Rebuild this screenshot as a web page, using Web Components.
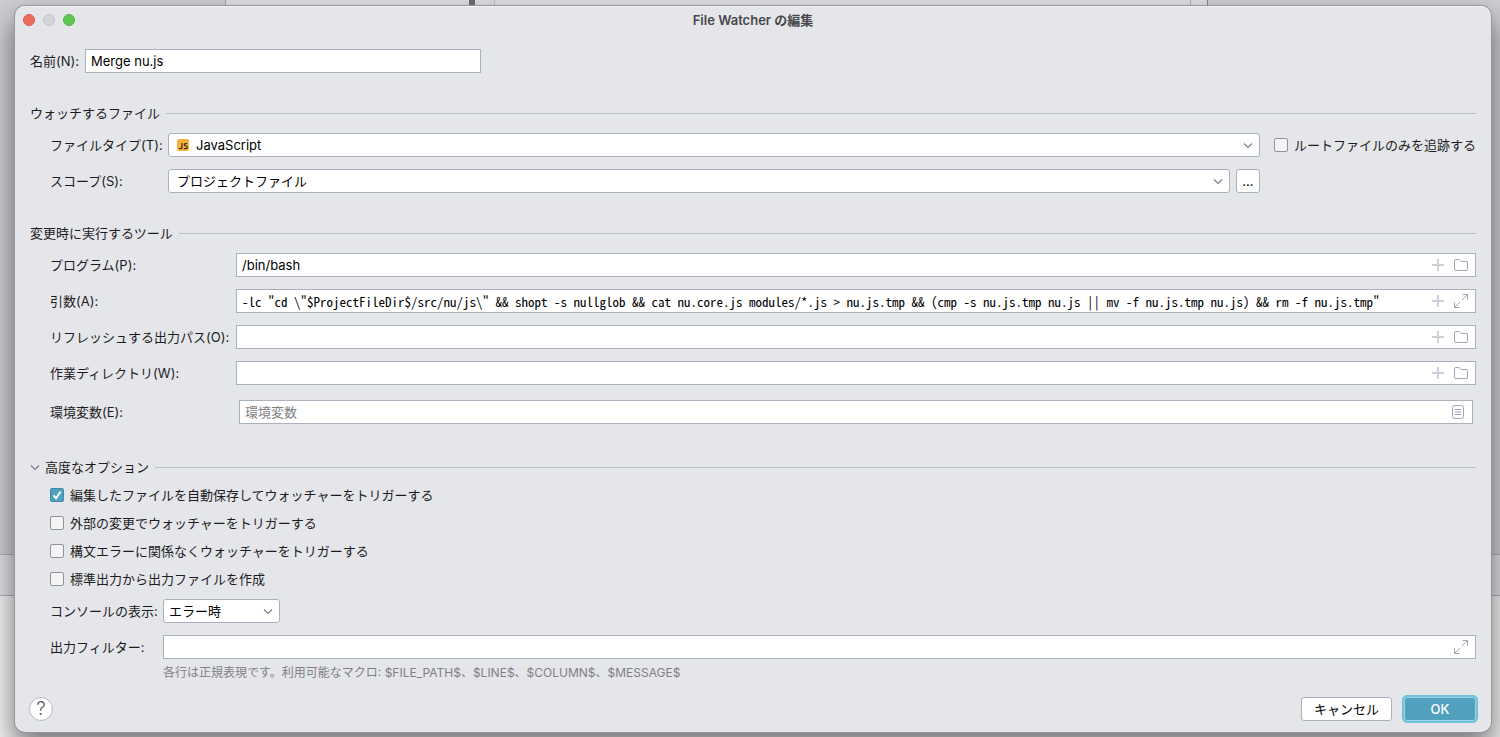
<!DOCTYPE html>
<html lang="ja">
<head>
<meta charset="utf-8">
<title>File Watcher の編集</title>
<style>
    html {
        height: 100%;
    }
    body {
        margin: 0;
        min-height: 100%;
        display: grid;
        font: 13px/16px Inter, "Noto Sans CJK JP", sans-serif;
        color: #1c1c1e;
        --panel: #e5e6ea;
        --border: #a9b1bd;
        --line: #bcbfc6;
        --muted: #808083;
        --accent: #50a0be;
    }
    ide-backdrop, watcher-dialog {
        grid-area: 1 / 1;
    }
    .watch {
        display: flex;
        align-items: flex-start;
        gap: 14px;
    }
    .stack {
        flex: 1;
        min-width: 0;
        display: flex;
        flex-direction: column;
        gap: 12px;
    }
    .watch check-option {
        margin-top: 4px;
    }
</style>
</head>
<body>
<ide-backdrop></ide-backdrop>

<watcher-dialog heading="File Watcher の編集">
    <text-row class="name" label="名前(N):" value="Merge nu.js" style="--label-width: 55px; --row-width: 451px"></text-row>

    <option-group heading="ウォッチするファイル" style="--label-width: 118px">
        <div class="watch">
            <div class="stack">
                <select-row label="ファイルタイプ(T):" value="JavaScript" icon="js" wide></select-row>
                <select-row label="スコープ(S):" value="プロジェクトファイル" wide more></select-row>
            </div>
            <check-option label="ルートファイルのみを追跡する"></check-option>
        </div>
    </option-group>

    <option-group heading="変更時に実行するツール" style="--label-width: 186px">
        <text-row label="プログラム(P):" value="/bin/bash" actions="add folder"></text-row>
        <text-row label="引数(A):" mono actions="add expand"
            value='-lc "cd \"$ProjectFileDir$/src/nu/js\" &amp;&amp; shopt -s nullglob &amp;&amp; cat nu.core.js modules/*.js &gt; nu.js.tmp &amp;&amp; (cmp -s nu.js.tmp nu.js || mv -f nu.js.tmp nu.js) &amp;&amp; rm -f nu.js.tmp"'></text-row>
        <text-row label="リフレッシュする出力パス(O):" actions="add folder"></text-row>
        <text-row label="作業ディレクトリ(W):" actions="add folder"></text-row>
        <text-row label="環境変数(E):" placeholder="環境変数" actions="list" inset></text-row>
    </option-group>

    <option-group heading="高度なオプション" collapsible style="--label-width: 113px">
        <check-option label="編集したファイルを自動保存してウォッチャーをトリガーする" checked></check-option>
        <check-option label="外部の変更でウォッチャーをトリガーする"></check-option>
        <check-option label="構文エラーに関係なくウォッチャーをトリガーする"></check-option>
        <check-option label="標準出力から出力ファイルを作成"></check-option>
        <select-row label="コンソールの表示:" value="エラー時"></select-row>
        <text-row label="出力フィルター:" actions="expand" hint="各行は正規表現です。利用可能なマクロ: $FILE_PATH$、$LINE$、$COLUMN$、$MESSAGE$"></text-row>
    </option-group>

    <help-button slot="help"></help-button>
    <push-button slot="buttons">キャンセル</push-button>
    <push-button slot="buttons" primary>OK</push-button>
</watcher-dialog>

<script>
const icons = {
    add: '<svg width="16" height="16" viewBox="0 0 16 16"><path d="M8 2v12M2 8h12" stroke="#cdcfd9" stroke-width="2"/></svg>',
    folder: '<svg width="16" height="16" viewBox="0 0 16 16" fill="none" stroke="#9fa4b8"><path d="M1.500 4a1.500 1.500 0 0 1 1.500-1.500h3L8 4.500h5a1.500 1.500 0 0 1 1.500 1.500v6a1.500 1.500 0 0 1-1.500 1.500H3A1.500 1.500 0 0 1 1.500 12z"/></svg>',
    expand: '<svg width="16" height="16" viewBox="0 0 16 16" fill="none" stroke="#9fa4b8"><path d="M9.500 1.500h5v5M14.500 1.500L9 7M6.500 14.500h-5v-5M1.500 14.500L7 9"/></svg>',
    list: '<svg width="16" height="16" viewBox="0 0 16 16" fill="none" stroke="#9fa4b8"><rect x="2.500" y="1.500" width="11" height="13" rx="2"/><path d="M5 5.500h6M5 10.500h6"/><path d="M5 8h6" stroke="#cdcfd9" stroke-width="2"/></svg>',
    chevron: '<svg width="16" height="16" viewBox="0 0 16 16" fill="none" stroke="#767a8a" stroke-width="1.100"><path d="M4 6.500L8 10.500l4-4"/></svg>',
    js: '<svg width="12" height="12" viewBox="0 0 12 12"><rect width="12" height="12" rx="2" fill="#f5b13c"/><path d="M5 4v4.200q0 1.500-1.400 1.500-.9 0-1.400-.5M10.200 5Q9.500 4.500 8.600 4.500 7.300 4.500 7.300 5.600T8.800 7 10.300 8.500 8.700 9.700 6.900 9.100" fill="none" stroke="#29231a" stroke-width="1.200"/></svg>'
};

const actionNames = {
    add: 'マクロを挿入',
    folder: '参照',
    expand: '展開',
    list: '変数の編集'
};

class BaseElement extends HTMLElement {

    connectedCallback() {
        this.shadow = this.attachShadow({mode: 'open'});
        this.shadow.innerHTML = this.template();
        this.bind();
    }

    attr(name) {
        return (this.getAttribute(name) || '').replace(/&/g, '&amp;').replace(/"/g, '&quot;').replace(/</g, '&lt;');
    }

    bind() {}

}

// IDE windows behind the dialog
class IdeBackdrop extends BaseElement {

    template() {
        return `
<style>
    :host {
        display: flex;
        flex-direction: column;
        background: #cecfd3;
    }
    .window {
        height: 6px;
        margin: 0 292px 0 225px;
        display: flex;
        background: #dfe0e4;
        border-left: 1px solid #a2a3a7;
        border-right: 1px solid #85868a;
    }
    .tree {
        flex: 0 0 243px;
    }
    .bar {
        flex: 0 0 6px;
        background: #6c6d70;
    }
    .gutter {
        flex: 0 0 19px;
        border-right: 1px solid #c0c1c5;
    }
    .editor {
        flex: 1;
        border-right: 1px solid #b5b6ba;
    }
    .scroll {
        flex: 0 0 16px;
    }
    .space {
        flex: 1;
    }
    .status {
        height: 42px;
        border-top: 1px solid #b4b5b9;
        border-bottom: 1px solid #aeb4bc;
        background: #dfe1e6;
        box-sizing: border-box;
    }
    .console {
        height: 141px;
        background: #f2f2f2;
    }
</style>
<div class="window">
    <div class="tree"></div>
    <div class="bar"></div>
    <div class="gutter"></div>
    <div class="editor"></div>
    <div class="scroll"></div>
</div>
<div class="space"></div>
<div class="status"></div>
<div class="console"></div>
        `;
    }

}
customElements.define('ide-backdrop', IdeBackdrop);

class WatcherDialog extends BaseElement {

    template() {
        return `
<style>
    :host {
        display: flex;
        flex-direction: column;
        margin: 6px 9px 5px 15px;
        border-radius: 10px;
        background: var(--panel);
        box-shadow: inset 0 1px #f4f5f7, 0 0 0 1px #96979b, 0 14px 28px 2px #00000080;
        z-index: 1;
    }
    header {
        display: grid;
        grid-template-columns: 1fr auto 1fr;
        align-items: center;
        height: 28px;
        padding: 0 8px;
    }
    .lights {
        display: flex;
        gap: 8px;
    }
    .lights button {
        width: 12px;
        height: 12px;
        padding: 0;
        border: 1px solid #e0574c;
        border-radius: 50%;
        background: #ee6a5f;
    }
    .lights .min {
        border-color: #c5c6c8;
        background: #d5d6d8;
    }
    .lights .max {
        border-color: #50b244;
        background: #61c554;
    }
    h1 {
        margin: 0;
        font-size: 13px;
        line-height: 16px;
        font-weight: 600;
        color: #47484b;
    }
    main {
        flex: 1;
        display: flex;
        flex-direction: column;
        gap: 32px;
        padding: 15px 15px 14px;
    }
    footer {
        display: flex;
        align-items: center;
        padding: 0 13px 9px 14px;
    }
    .buttons {
        margin-left: auto;
        display: flex;
        align-items: center;
        gap: 10px;
    }
</style>
<header>
    <div class="lights">
        <button aria-label="閉じる"></button>
        <button class="min" aria-label="しまう" disabled></button>
        <button class="max" aria-label="拡大"></button>
    </div>
    <h1>${this.attr('heading')}</h1>
</header>
<main><slot></slot></main>
<footer>
    <slot name="help"></slot>
    <div class="buttons"><slot name="buttons"></slot></div>
</footer>
        `;
    }

}
customElements.define('watcher-dialog', WatcherDialog);

class OptionGroup extends BaseElement {

    template() {
        return `
<style>
    :host {
        display: block;
    }
    h2 {
        margin: 0 0 12px;
        display: flex;
        align-items: center;
        gap: 6px;
        font-size: 13px;
        line-height: 16px;
        font-weight: 400;
    }
    h2::after {
        content: "";
        flex: 1;
        height: 1px;
        background: var(--line);
    }
    button {
        display: flex;
        align-items: center;
        margin-left: -3px;
        padding: 0;
        border: 0;
        background: none;
        font: inherit;
        color: inherit;
    }
    svg {
        margin-right: 2px;
    }
    .content {
        display: flex;
        flex-direction: column;
        gap: 12px;
        padding-left: 20px;
    }
    .content[hidden] {
        display: none;
    }
</style>
<h2>${this.hasAttribute('collapsible') ? `<button aria-expanded="true">${icons.chevron}${this.attr('heading')}</button>` : this.attr('heading')}</h2>
<div class="content"><slot></slot></div>
        `;
    }

    bind() {
        const toggle = this.shadow.querySelector('button');
        if (!toggle) return;
        toggle.addEventListener('click', () => {
            const content = this.shadow.querySelector('.content');
            content.hidden = !content.hidden;
            toggle.setAttribute('aria-expanded', !content.hidden);
        });
    }

}
customElements.define('option-group', OptionGroup);

class TextRow extends BaseElement {

    template() {
        const actions = this.attr('actions').split(' ').filter(Boolean);
        return `
<style>
    :host {
        display: grid;
        grid-template-columns: var(--label-width) 1fr;
        align-items: center;
        max-width: var(--row-width, none);
    }
    label {
        white-space: nowrap;
    }
    .box {
        display: flex;
        align-items: center;
        gap: 7px;
        height: 24px;
        box-sizing: border-box;
        border: 1px solid var(--border);
        background: #fff;
        padding-right: 6px;
    }
    :host([inset]) .box {
        margin: 3px;
    }
    input {
        flex: 1;
        min-width: 0;
        height: 22px;
        padding: 0 5px;
        border: 0;
        outline: 0;
        background: none;
        font: inherit;
        color: #000;
    }
    :host([mono]) input {
        font-family: "Noto Sans Mono CJK JP", "Liberation Mono", monospace;
    }
    input::placeholder {
        color: var(--muted);
    }
    button {
        display: flex;
        padding: 0;
        border: 0;
        background: none;
    }
    p {
        grid-column: 2;
        margin: 6px 0 0;
        font-size: 12px;
        line-height: 16px;
        color: var(--muted);
    }
</style>
<label for="field">${this.attr('label')}</label>
<div class="box">
    <input id="field" type="text" value="${this.attr('value')}" placeholder="${this.attr('placeholder')}">
    ${actions.map(name => `<button aria-label="${actionNames[name]}">${icons[name]}</button>`).join('')}
</div>
${this.hasAttribute('hint') ? `<p>${this.attr('hint')}</p>` : ''}
        `;
    }

}
customElements.define('text-row', TextRow);

class SelectRow extends BaseElement {

    template() {
        return `
<style>
    :host {
        display: flex;
        align-items: center;
    }
    label {
        flex: 0 0 var(--label-width);
        white-space: nowrap;
    }
    .box {
        display: flex;
        align-items: center;
        width: 117px;
        height: 24px;
        box-sizing: border-box;
        border: 1px solid var(--border);
        border-radius: 3px;
        background: #fff;
        padding: 0 3px 0 5px;
    }
    :host([wide]) .box {
        flex: 1;
        padding-left: 8px;
    }
    .box svg {
        flex: none;
    }
    :host([icon]) select {
        margin-left: 7px;
    }
    select {
        flex: 1;
        min-width: 0;
        height: 22px;
        padding: 0;
        border: 0;
        outline: 0;
        appearance: none;
        background: none;
        font: inherit;
        color: #000;
    }
    .more {
        width: 24px;
        height: 24px;
        margin-left: 6px;
        padding: 0;
        border: 1px solid var(--border);
        border-radius: 3px;
        background: #fff;
        font: inherit;
        color: #000;
    }
</style>
<label for="field">${this.attr('label')}</label>
<div class="box">
    ${icons[this.getAttribute('icon')] || ''}
    <select id="field"><option>${this.attr('value')}</option></select>
    ${icons.chevron}
</div>
${this.hasAttribute('more') ? '<button class="more">...</button>' : ''}
        `;
    }

}
customElements.define('select-row', SelectRow);

class CheckOption extends BaseElement {

    template() {
        return `
<style>
    :host {
        display: block;
    }
    label {
        display: flex;
        align-items: center;
        gap: 6px;
        white-space: nowrap;
    }
    .tick {
        display: grid;
    }
    .tick > * {
        grid-area: 1 / 1;
    }
    input {
        width: 14px;
        height: 14px;
        margin: 0;
        border: 1px solid #8f949e;
        border-radius: 2px;
        appearance: none;
        background: #f4f4f4;
    }
    input:checked {
        border-color: #4189a5;
        background: var(--accent);
    }
    svg {
        visibility: hidden;
        pointer-events: none;
    }
    input:checked + svg {
        visibility: visible;
    }
</style>
<label>
    <span class="tick">
        <input type="checkbox" ${this.hasAttribute('checked') ? 'checked' : ''}>
        <svg width="14" height="14" viewBox="0 0 14 14"><path d="M3.500 7.300L6 10.200 10.700 3.500" fill="none" stroke="#fff" stroke-width="2"/></svg>
    </span>
    ${this.attr('label')}
</label>
        `;
    }

}
customElements.define('check-option', CheckOption);

class HelpButton extends BaseElement {

    template() {
        return `
<style>
    :host {
        display: block;
    }
    button {
        display: block;
        width: 24px;
        height: 24px;
        padding: 0;
        border: 1px solid #b4b9c6;
        border-radius: 50%;
        background: #fff;
        font: 300 19px/20px Inter, sans-serif;
        color: #5c5e63;
    }
</style>
<button>?</button>
        `;
    }

}
customElements.define('help-button', HelpButton);

class PushButton extends BaseElement {

    template() {
        return `
<style>
    :host {
        display: block;
    }
    button {
        display: block;
        min-width: 72px;
        height: 24px;
        padding: 0 12px;
        border: 1px solid var(--border);
        border-radius: 3px;
        background: #fff;
        font: inherit;
        color: #000;
    }
    :host([primary]) button {
        margin: 2px;
        border-color: #9ad6e8;
        background: var(--accent);
        box-shadow: 0 0 0 2px #72c0da;
        font-weight: 500;
        color: #fff;
    }
</style>
<button><slot></slot></button>
        `;
    }

}
customElements.define('push-button', PushButton);
</script>
</body>
</html>
